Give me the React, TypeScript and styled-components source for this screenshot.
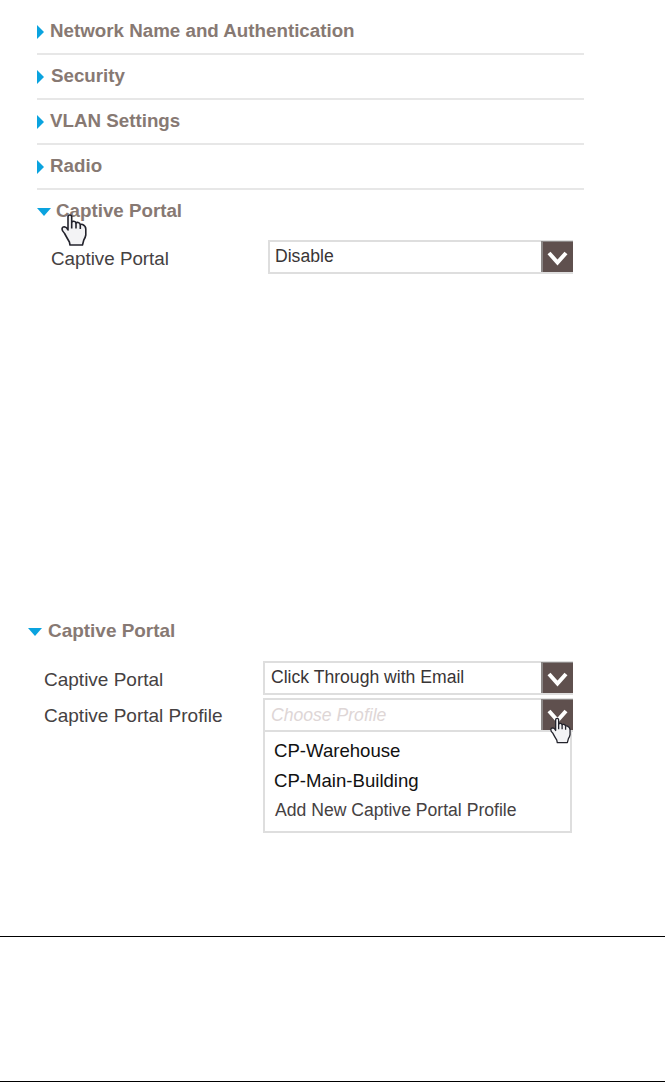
import React from "react";
import styled, { createGlobalStyle } from "styled-components";

const GlobalStyle = createGlobalStyle`
  * {
    box-sizing: border-box;
  }
  body {
    margin: 0;
    background: #fff;
    font-family: "Liberation Sans", Arial, sans-serif;
  }
`;

const Page = styled.div`
  height: 1082px;
  overflow: hidden;
  padding-top: 10px;
  display: flex;
  flex-direction: column;
`;

const Accordion = styled.div<{ $left: number }>`
  width: 547px;
  margin-left: ${props => props.$left}px;
`;

const SectionHeader = styled.div<{ $line?: boolean; $gap: number }>`
  display: flex;
  align-items: center;
  gap: ${props => props.$gap}px;
  height: 45px;
  padding-bottom: ${props => (props.$line ? 0 : 2)}px;
  border-bottom: ${props => (props.$line ? "2px solid #e7e7e7" : "none")};

  svg {
    flex: none;
    margin-top: 1px;
  }
`;

const Title = styled.div<{ $size?: number }>`
  position: relative;
  color: #877973;
  font-size: ${props => props.$size || 18.75}px;
  font-weight: bold;
  line-height: 24px;
  padding-bottom: 2px;
  white-space: nowrap;
`;

const FieldRow = styled.div<{ $left: number; $top: number }>`
  display: flex;
  align-items: flex-start;
  height: 34px;
  margin-top: ${props => props.$top}px;
  padding-left: ${props => props.$left}px;
`;

const Label = styled.label<{ $width: number; $shift: number; $size?: number }>`
  flex: none;
  width: ${props => props.$width}px;
  padding-top: ${props => props.$shift}px;
  color: #454142;
  font-size: ${props => props.$size || 18.8}px;
  line-height: 34px;
  white-space: nowrap;
`;

const Select = styled.div<{ $width: number }>`
  display: flex;
  justify-content: space-between;
  width: ${props => props.$width}px;
  height: 34px;
  border: 2px solid #dedede;
  border-right-width: 1px;
`;

const Value = styled.span<{ $placeholder?: boolean; $indent?: number }>`
  padding-left: ${props => props.$indent || 5}px;
  color: ${props => (props.$placeholder ? "#ded6d6" : "#393536")};
  font-style: ${props => (props.$placeholder ? "italic" : "normal")};
  font-size: 17.6px;
  line-height: ${props => (props.$placeholder ? 30 : 28)}px;
  white-space: nowrap;
`;

const ArrowButton = styled.div`
  position: relative;
  width: 32px;
  height: 31px;
  margin-top: -1px;
  margin-right: -1px;
  background: #5f504e;
  border-left: 2px solid #8b8786;
  border-top: 1px solid #8b8786;

  > svg {
    display: block;
  }
`;

const Menu = styled.div`
  width: 309px;
  height: 101px;
  margin-left: 263px;
  padding: 3px 0 0 9px;
  border: 2px solid #dedede;
  border-top: none;
`;

const MenuItem = styled.div<{ $small?: boolean }>`
  height: 30.4px;
  padding-left: ${props => (props.$small ? 1 : 0)}px;
  color: ${props => (props.$small ? "#454142" : "#111")};
  font-size: ${props => (props.$small ? 17.6 : 18.6)}px;
  line-height: ${props => (props.$small ? 29 : 31)}px;
  white-space: nowrap;
`;

const Spacer = styled.div`
  height: 336px;
`;

const Footer = styled.div`
  height: 146px;
  margin-top: auto;
  border-top: 1px solid #000;
  border-bottom: 1px solid #000;
`;

const CursorSvg = styled.svg<{ $x: number; $y: number }>`
  position: absolute;
  z-index: 2;
  left: ${props => props.$x}px;
  top: ${props => props.$y}px;
`;

const Closed = () => (
  <svg width="7" height="14" viewBox="0 0 7 14">
    <path d="M0 0L7 7L0 14Z" fill="#0aa3df" />
  </svg>
);

const Opened = () => (
  <svg width="14" height="8" viewBox="0 0 14 8">
    <path d="M0 0H14L7 8Z" fill="#0aa3df" />
  </svg>
);

const Chevron = () => (
  <svg width="30" height="30" viewBox="0 0 30 30">
    <path d="M6 11L14.5 20.5L23 11" fill="none" stroke="#fff" strokeWidth="4" />
  </svg>
);

const Cursor = ({ x, y, width, height }: { x: number; y: number; width: number; height: number }) => (
  <CursorSvg $x={x} $y={y} width={width} height={height} viewBox="0 0 26 32">
    <path
      d="M7 16V2.8Q7 1 8.8 1Q10.7 1 10.7 2.8V8Q11.4 7.2 12.8 7.3Q14.6 7.5 15 9Q15.7 8.2 17.2 8.5Q19 9 19.3 10.6Q20.2 10 21.6 10.5Q24.8 12 24.8 15V21Q24.4 23.5 22.8 26L21.5 31H9L8.4 28Q6 24 3.6 19.5Q1 17 1 15Q1.2 12.8 3.4 12.8Q5.5 13 7 16Z"
      fill="#f3f3f5"
      stroke="#23232c"
      strokeWidth="1.6"
      strokeLinejoin="round"
    />
    <path d="M10.7 8V14.5M15 9V14.5M19.3 10.6V15" fill="none" stroke="#23232c" strokeWidth="1.6" />
  </CursorSvg>
);

const sections = [
  { name: "Network Name and Authentication", gap: 6 },
  { name: "Security", gap: 7 },
  { name: "VLAN Settings", gap: 6 },
  { name: "Radio", gap: 6 }
];

const App = (): JSX.Element => {
  return (
    <Page>
      <GlobalStyle />
      <Accordion $left={37}>
        {sections.map(section => (
          <SectionHeader key={section.name} $line $gap={section.gap}>
            <Closed />
            <Title>{section.name}</Title>
          </SectionHeader>
        ))}
        <SectionHeader $gap={5}>
          <Opened />
          <Title>
            Captive Portal
            <Cursor x={5} y={14} width={26} height={32} />
          </Title>
        </SectionHeader>
      </Accordion>
      <FieldRow $left={51} $top={5}>
        <Label $width={217} $shift={2}>Captive Portal</Label>
        <Select $width={305}>
          <Value>Disable</Value>
          <ArrowButton>
            <Chevron />
          </ArrowButton>
        </Select>
      </FieldRow>
      <Spacer />
      <Accordion $left={28}>
        <SectionHeader $gap={6}>
          <Opened />
          <Title $size={18.95}>Captive Portal</Title>
        </SectionHeader>
      </Accordion>
      <FieldRow $left={44} $top={6}>
        <Label $width={219} $shift={2} $size={19}>Captive Portal</Label>
        <Select $width={310}>
          <Value $indent={6}>Click Through with Email</Value>
          <ArrowButton>
            <Chevron />
          </ArrowButton>
        </Select>
      </FieldRow>
      <FieldRow $left={44} $top={3}>
        <Label $width={219} $shift={1} $size={19}>Captive Portal Profile</Label>
        <Select $width={310}>
          <Value $placeholder $indent={6}>Choose Profile</Value>
          <ArrowButton>
            <Chevron />
            <Cursor x={7} y={17} width={21} height={27} />
          </ArrowButton>
        </Select>
      </FieldRow>
      <Menu>
        <MenuItem>CP-Warehouse</MenuItem>
        <MenuItem>CP-Main-Building</MenuItem>
        <MenuItem $small>Add New Captive Portal Profile</MenuItem>
      </Menu>
      <Footer />
    </Page>
  );
};

export default App;
